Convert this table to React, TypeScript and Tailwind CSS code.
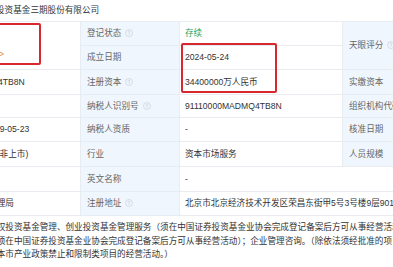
import React from "react";

const label = "bg-[#f0f6fd] text-[#666] pl-[6px] border border-[#e8ecf1] whitespace-nowrap";
const value = "text-[#333] pl-[5px] border border-[#e8ecf1] whitespace-nowrap";
const valueA = "text-[#333] pl-[27px] border border-[#e8ecf1] whitespace-nowrap overflow-hidden";

function Tip() {
  return (
    <svg viewBox="0 0 16 16" className="w-[8px] h-[8px] ml-[4px] shrink-0" fill="none" stroke="#c9ced6" strokeWidth="1.3">
      <circle cx="8" cy="8" r="7" />
      <path d="M6 6.2a2 2 0 1 1 2.6 1.9c-.4.2-.6.5-.6.9v.6" strokeLinecap="round" />
      <circle cx="8" cy="11.6" r=".7" fill="#c9ced6" stroke="none" />
    </svg>
  );
}

function Label({ text, tip }: { text: string; tip?: boolean }) {
  return (
    <div className="flex items-center">
      <span>{text}</span>
      {tip && <Tip />}
    </div>
  );
}

export default function App() {
  return (
    <div className="relative w-[393px] h-[267px] overflow-hidden bg-white font-['Liberation_Sans','Noto_Sans_CJK_SC',sans-serif] text-[8.6px]">
      {/* company name */}
      <div className="h-[21px] flex items-center -ml-[4px] text-[#333] whitespace-nowrap">
        投资基金三期股份有限公司
      </div>

      {/* info table */}
      <div className="-ml-[200px] w-[800px]">
        <table className="table-fixed border-collapse w-[800px]">
          <colgroup>
            <col className="w-[100px]" />
            <col className="w-[180px]" />
            <col className="w-[99px]" />
            <col className="w-[163px]" />
            <col className="w-[98px]" />
            <col className="w-[160px]" />
          </colgroup>
          <tbody>
            <tr className="h-[24px]">
              <td rowSpan={2} className={label}>法定代表人</td>
              <td rowSpan={2} className="pl-[10px] border border-[#e8ecf1]">
                <div className="flex items-center gap-[6px]">
                  <div className="w-[30px] h-[30px] rounded-[3px] bg-[#f5a623] text-white flex items-center justify-center text-[12px]">
                    张
                  </div>
                  <div className="flex flex-col gap-[4px] whitespace-nowrap">
                    <span className="text-[#0084ff]">张伟</span>
                    <span className="text-[#e08a3c]">TA有2家企业 &gt;</span>
                  </div>
                </div>
              </td>
              <td className={label}><Label text="登记状态" tip /></td>
              <td className={value + " text-[#1aa35f]"}><span className="text-[#1aa35f]">存续</span></td>
              <td rowSpan={2} className={label}><Label text="天眼评分" tip /></td>
              <td rowSpan={2} className={value}>-</td>
            </tr>
            <tr className="h-[24px]">
              <td className={label}><Label text="成立日期" /></td>
              <td className={value}>2024-05-24</td>
            </tr>
            <tr className="h-[25px]">
              <td className={label}>统一社会信用代码</td>
              <td className={valueA}>91110000MADMQ4TB8N</td>
              <td className={label}><Label text="注册资本" tip /></td>
              <td className={value}>34400000万人民币</td>
              <td className={label}><Label text="实缴资本" /></td>
              <td className={value}>-</td>
            </tr>
            <tr className="h-[23px]">
              <td className={label}>工商注册号</td>
              <td className={valueA}></td>
              <td className={label}><Label text="纳税人识别号" tip /></td>
              <td className={value}>91110000MADMQ4TB8N</td>
              <td className={label}><Label text="组织机构代码" /></td>
              <td className={value}>MADMQ4TB-8</td>
            </tr>
            <tr className="h-[24px]">
              <td className={label}>营业期限</td>
              <td className={valueA}>2024-05-24 至 2099-05-23</td>
              <td className={label}><Label text="纳税人资质" /></td>
              <td className={value}>-</td>
              <td className={label}><Label text="核准日期" /></td>
              <td className={value}>2024-05-24</td>
            </tr>
            <tr className="h-[25px]">
              <td className={label}>企业类型</td>
              <td className={valueA}>其他股份有限公司(非上市)</td>
              <td className={label}><Label text="行业" /></td>
              <td className={value}>资本市场服务</td>
              <td className={label}><Label text="人员规模" /></td>
              <td className={value}>-</td>
            </tr>
            <tr className="h-[25px]">
              <td className={label}>曾用名</td>
              <td className={valueA}></td>
              <td className={label}><Label text="英文名称" /></td>
              <td colSpan={3} className={value}>-</td>
            </tr>
            <tr className="h-[24px]">
              <td className={label}>登记机关</td>
              <td className={valueA}>北京市市场监督管理局</td>
              <td className={label}><Label text="注册地址" tip /></td>
              <td colSpan={3} className={value}>北京市北京经济技术开发区荣昌东街甲5号3号楼9层901</td>
            </tr>
            <tr>
              <td className={label + " align-top pt-[5px]"}>经营范围</td>
              <td colSpan={5} className="text-[#333] pl-[27px] pt-[5px] pb-[6px] border border-[#e8ecf1] leading-[13.5px] whitespace-nowrap overflow-hidden">
                <div>一般项目：私募股权投资基金管理、创业投资基金管理服务（须在中国证券投资基金业协会完成登记备案后方可从事经营活动）；以私募基金从事股权投资、投资管理、</div>
                <div>资产管理等活动（须在中国证券投资基金业协会完成登记备案后方可从事经营活动）；企业管理咨询。（除依法须经批准的项目外，凭营业执照依法自主开展经营活动）</div>
                <div>（不得从事国家和本市产业政策禁止和限制类项目的经营活动。）</div>
              </td>
            </tr>
          </tbody>
        </table>
      </div>

      {/* highlight boxes */}
      <div className="absolute left-[-10px] top-[23px] w-[51px] h-[42px] border-2 border-[#d8272e] rounded-[2px]" />
      <div className="absolute left-[181px] top-[43px] w-[96px] h-[50px] border-2 border-[#d8272e] rounded-[2px]" />
    </div>
  );
}
